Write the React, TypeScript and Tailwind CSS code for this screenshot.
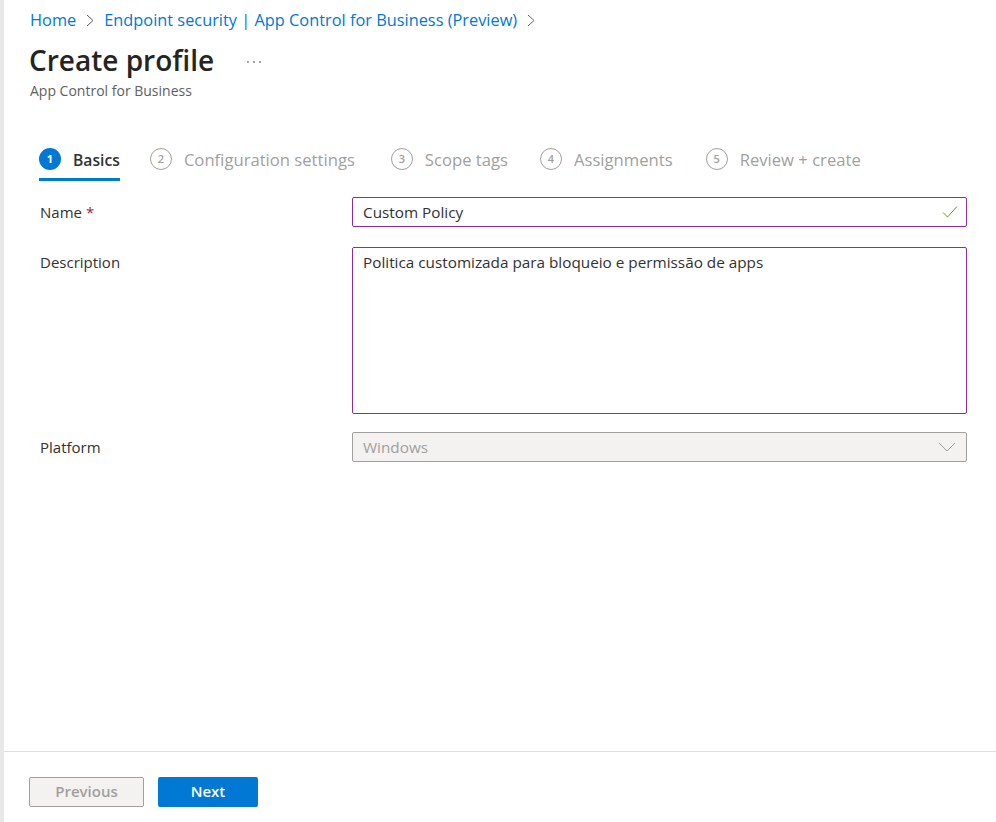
const font = "font-['Open_Sans','Noto_Sans',sans-serif]";

const steps = [
  { n: 2, label: "Configuration settings", gap: "ml-[30px]" },
  { n: 3, label: "Scope tags", gap: "ml-[36px]" },
  { n: 4, label: "Assignments", gap: "ml-[32px]" },
  { n: 5, label: "Review + create", gap: "ml-[33px]" },
];

function Crumb() {
  return (
    <svg width="8" height="13" viewBox="0 0 8 13" fill="none" stroke="#605e5c" strokeWidth="1" className="mx-[10px]">
      <path d="M1 1 L7 6.5 L1 12" />
    </svg>
  );
}

function Field({ label, required, top, children }: { label: string; required?: boolean; top?: string; children: React.ReactNode }) {
  return (
    <div className={`flex ${top ?? ""}`}>
      <div className="w-[312px] pt-[5px] text-[15px] leading-[20px] text-[#323130]">
        {label}
        {required && <span className="ml-1 text-[#a4262c]">*</span>}
      </div>
      <div className="w-[615px]">{children}</div>
    </div>
  );
}

export default function App() {
  return (
    <div className={`flex h-[822px] w-[996px] flex-col overflow-hidden border-l-4 border-[#e8e8e8] bg-white ${font}`}>
      <div className="flex-1">
        <nav className="flex h-[39px] items-center pl-[26px] pt-[1px] text-[16.35px] text-[#0078d4]">
          <span>Home</span>
          <Crumb />
          <span>Endpoint security | App Control for Business (Preview)</span>
          <Crumb />
        </nav>
        <div className="flex h-[42px] items-center pl-[25px]">
          <h1 className="text-[28px] font-semibold leading-[42px] text-[#252423]">Create profile</h1>
          <svg width="16" height="4" viewBox="0 0 16 4" fill="#323130" className="ml-[32px] mt-[3px]">
            <circle cx="2" cy="2" r="0.8" />
            <circle cx="8" cy="2" r="0.8" />
            <circle cx="14" cy="2" r="0.8" />
          </svg>
        </div>
        <div className="pl-[26px] pt-[1px] text-[14px] leading-[18px] text-[#605e5c]">App Control for Business</div>

        <div className="ml-[35px] mt-[48px] flex h-[33px] items-start">
          <div className="flex h-[33px] items-start border-b-[3px] border-[#0078d4]">
            <span className="flex h-[22px] w-[22px] items-center justify-center rounded-full bg-[#0078d4] text-[11px] font-bold text-white">1</span>
            <span className="ml-[12px] text-[15.7px] font-semibold leading-[24px] text-[#323130]">Basics</span>
          </div>
          {steps.map((s) => (
            <div key={s.n} className={`flex items-start ${s.gap}`}>
              <span className="flex h-[22px] w-[22px] items-center justify-center rounded-full border border-[#a19f9d] text-[11px] font-semibold text-[#a19f9d]">{s.n}</span>
              <span className="ml-[12px] text-[16.65px] leading-[24px] text-[#a19f9d]">{s.label}</span>
            </div>
          ))}
        </div>

        <div className="ml-[36px] mt-[16px]">
          <Field label="Name" required>
            <div className="flex h-[30px] items-center justify-between rounded-[2px] border border-[#8a2da5] pl-[10px] pr-[8px] text-[15.3px] text-[#323130]">
              <span>Custom Policy</span>
              <svg width="16" height="16" viewBox="0 0 16 16" fill="none" stroke="#57a300" strokeWidth="1">
                <path d="M1 8.5 L5.5 13 L15 2.5" />
              </svg>
            </div>
          </Field>
          <Field label="Description" top="mt-[20px]">
            <div className="h-[167px] rounded-[2px] border border-[#8a2da5] px-[10px] pt-[3px] text-[15.3px] leading-[22px] text-[#323130]">
              Politica customizada para bloqueio e permissão de apps
            </div>
          </Field>
          <Field label="Platform" top="mt-[18px]">
            <div className="flex h-[30px] items-center justify-between rounded-[2px] border border-[#a19f9d] bg-[#f3f2f1] pl-[10px] pr-[10px] text-[15.3px] text-[#a19f9d]">
              <span>Windows</span>
              <svg width="18" height="10" viewBox="0 0 18 10" fill="none" stroke="#a19f9d" strokeWidth="1">
                <path d="M1 1 L9 9 L17 1" />
              </svg>
            </div>
          </Field>
        </div>
      </div>

      <div className="flex h-[71px] items-start gap-[14px] border-t border-[#e1dfdd] pl-[25px] pt-[25px]">
        <button className="h-[30px] w-[115px] rounded-[2px] border border-[#a19f9d] bg-[#f3f2f1] pb-[2px] text-[15px] font-semibold leading-[26px] text-[#a19f9d]">Previous</button>
        <button className="h-[30px] w-[100px] rounded-[2px] bg-[#0078d4] pb-[2px] text-[15px] font-semibold leading-[26px] text-white">Next</button>
      </div>
    </div>
  );
}
